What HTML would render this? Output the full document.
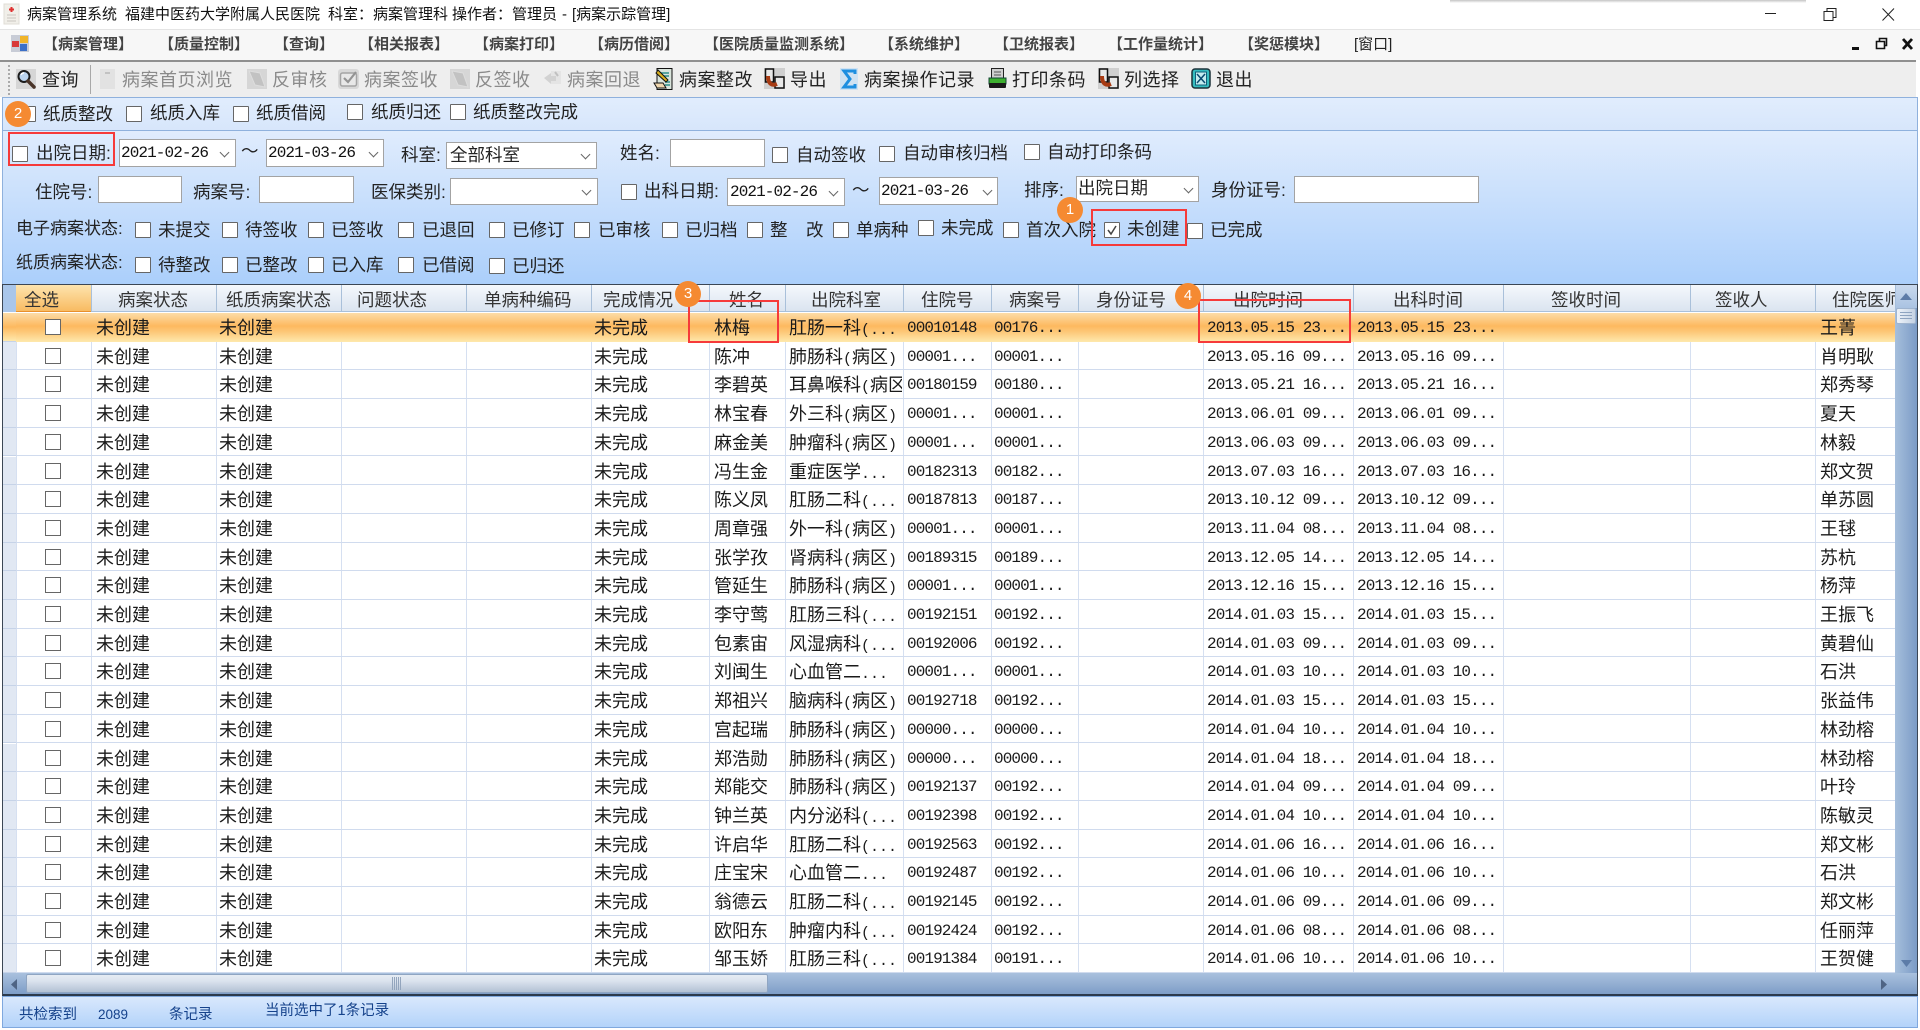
<!DOCTYPE html>
<html lang="zh-CN"><head><meta charset="utf-8"><title>病案管理系统</title>
<style>
*{box-sizing:border-box}
html,body{margin:0;padding:0;width:1920px;height:1030px;overflow:hidden;background:#fff}
body{position:relative;font-family:"Liberation Sans","Noto Sans CJK SC",sans-serif;color:#222;font-size:17.5px}
.t{position:absolute;white-space:nowrap;line-height:24px;height:24px}
.ti{font-size:15px;top:3px;color:#111}
.m{font-size:15px;top:33px;font-weight:700;color:#444}
.b{font-size:18px;letter-spacing:.5px;top:68px;color:#222}
.g{color:#8a8a8a}
.c{position:absolute;width:16px;height:16px;background:#fff;border:1.5px solid #666;border-radius:1px}
.i{position:absolute;background:#fff;border:1.5px solid #a3a3a3}
.a{position:absolute;width:7px;height:7px;border-right:1.2px solid #666;border-bottom:1.2px solid #666;transform:rotate(45deg)}
.d{font-family:"Liberation Mono",monospace;font-size:16px;letter-spacing:-.9px;color:#111}
.red{position:absolute;border:2.5px solid #f63a3a;z-index:6}
.o{position:absolute;width:26px;height:26px;border-radius:50%;background:#f58a32;color:#fff;font-size:15px;line-height:26px;text-align:center;z-index:7}
.h{position:absolute;top:288px;font-size:17.5px;line-height:24px;white-space:nowrap;color:#333}
.vh{position:absolute;top:285px;width:1px;height:27px;background:#a9c0da}
.vl{position:absolute;top:313px;width:1px;height:660px;background:#d6e0f1}
.r{position:absolute;left:16px;width:1879px;height:28.7px;border-bottom:1.5px solid #d0dbee}
.r i{position:absolute;left:29px;top:6px;width:16px;height:16px;background:#fff;border:1.5px solid #666}
.r span{position:absolute;top:1px;line-height:28px;font-size:18px;white-space:nowrap;color:#1a1a1a}
.r span b{font:15px "Liberation Mono",monospace}
.r span:nth-of-type(1){left:80px}
.r span:nth-of-type(2){left:203px}
.r span:nth-of-type(3){left:578px}
.r span:nth-of-type(4){left:698px}
.r span:nth-of-type(5){left:773px;width:113px;overflow:hidden}
.r span:nth-of-type(6){left:891px}
.r span:nth-of-type(7){left:978px}
.r span:nth-of-type(8){left:1191px}
.r span:nth-of-type(9){left:1341px}
.r span:nth-of-type(10){left:1804px}
.r span:nth-of-type(6),.r span:nth-of-type(7),.r span:nth-of-type(8),.r span:nth-of-type(9){font:16px/28px "Liberation Mono",monospace;letter-spacing:-.9px}
.sel{background:linear-gradient(#fcdca8,#fdb95f 45%,#fdc878 65%,#fee9ad);border-bottom:0}
.rh{position:absolute;left:3px;width:13px;height:28.7px;background:#e1e8f3;border-bottom:1.5px solid #c6d3e8}
.s{position:absolute;color:#15428b;font-size:14.5px;line-height:20px;white-space:nowrap}
svg{position:absolute;overflow:visible}
</style></head><body>

<!-- title bar -->
<div style="position:absolute;left:1450px;top:0;width:356px;height:3px;background:linear-gradient(#c4c4c4,#fff)"></div>
<svg style="left:3px;top:4px" width="18" height="20"><rect x="1" y="0" width="15" height="20" fill="#f1efe9" stroke="#e0ddd6"/><path d="M8.5 3v5M6 5.500h5" stroke="#e03030" stroke-width="2"/><path d="M4 11h9M4 14h9M4 17h9" stroke="#c9c6bf"/></svg>
<div class="t ti" style="left:27px">病案管理系统</div>
<div class="t ti" style="left:125px">福建中医药大学附属人民医院</div>
<div class="t ti" style="left:328px">科室：</div>
<div class="t ti" style="left:373px">病案管理科</div>
<div class="t ti" style="left:452px">操作者：</div>
<div class="t ti" style="left:512px">管理员</div>
<div class="t ti" style="left:562px">-</div>
<div class="t ti" style="left:572px">[病案示踪管理]</div>
<svg style="left:1765px;top:8px" width="130" height="13" fill="none" stroke="#222" stroke-width="1"><path d="M0 5.500h11"/><path d="M59 3.500h9v9h-9zM62 3.500V0.500h9v9h-3"/><path d="M117.500 .5l11.500 12M129 .5l-11.500 12"/></svg>

<!-- menu bar -->
<div style="position:absolute;left:0;top:29px;width:1920px;height:31px;background:#f7f7f7;border-top:1px solid #e4e4e4"></div>
<div style="position:absolute;left:0;top:60px;width:1916px;height:2px;background:#8f8f8f"></div>
<svg style="left:11px;top:35px" width="18" height="18"><rect width="18" height="17" fill="#c8ccd6"/><rect x="9" y="1" width="8" height="7" fill="#f0b428"/><rect x="1" y="6" width="7" height="6" fill="#d83838"/><rect x="9" y="9" width="7" height="7" fill="#3c70c8"/></svg>
<div class="t m" style="left:43px">【病案管理】</div>
<div class="t m" style="left:159px">【质量控制】</div>
<div class="t m" style="left:274px">【查询】</div>
<div class="t m" style="left:359px">【相关报表】</div>
<div class="t m" style="left:474px">【病案打印】</div>
<div class="t m" style="left:589px">【病历借阅】</div>
<div class="t m" style="left:704px">【医院质量监测系统】</div>
<div class="t m" style="left:879px">【系统维护】</div>
<div class="t m" style="left:994px">【卫统报表】</div>
<div class="t m" style="left:1108px">【工作量统计】</div>
<div class="t m" style="left:1239px">【奖惩模块】</div>
<div class="t m" style="left:1354px;font-weight:400;font-size:15px;color:#222">[窗口]</div>
<svg style="left:1852px;top:38px" width="62" height="13" fill="none" stroke="#111"><path d="M0 10.500h7" stroke-width="3"/><path d="M24.500 3.500h8v7h-8zM27.500 3V.5h7v7h-2" stroke-width="1.600"/><path d="M51 1l9 10M60 1l-9 10" stroke-width="2.800"/></svg>

<!-- toolbar -->
<div style="position:absolute;left:0;top:62px;width:1916px;height:35px;background:#eeeeee"></div>
<div style="position:absolute;left:8px;top:65px;width:2px;height:30px;background:repeating-linear-gradient(#aaa 0 2px,transparent 2px 4px)"></div>
<div style="position:absolute;left:90px;top:65px;width:1px;height:29px;background:#a8a8a8"></div>
<svg style="left:16px;top:69px" width="20" height="20"><rect width="20" height="20" fill="#d6d6d6"/><circle cx="8" cy="7.500" r="5.500" fill="#bcd4ee" stroke="#1c1c1c" stroke-width="2"/><path d="M5 6a3 3 0 0 1 3-2" stroke="#fff" stroke-width="1.500" fill="none"/><path d="M12 12l6 6" stroke="#4a3428" stroke-width="3.500" stroke-linecap="round"/></svg>
<div class="t b" style="left:42px">查询</div>
<svg style="left:99px;top:69px" width="18" height="20"><rect x="1" width="15" height="20" fill="#e2e2e2"/><path d="M6 4h5" stroke="#c2c2c2" stroke-width="2"/></svg>
<div class="t b g" style="left:122px">病案首页浏览</div>
<svg style="left:247px;top:69px" width="20" height="20"><rect width="20" height="20" fill="#d6d6d6"/><path d="M2 2l11 2 5 14-10-2z" fill="#c2c2c2" stroke="#ddd"/></svg>
<div class="t b g" style="left:272px">反审核</div>
<svg style="left:338px;top:69px" width="21" height="20"><rect width="21" height="20" rx="3" fill="#d8d8d8"/><rect x="2.500" y="4" width="16" height="13" rx="2" fill="#e8e8e8" stroke="#a4a4a4" stroke-width="1.500"/><path d="M6 9l4 4 8-10" stroke="#949494" stroke-width="2.200" fill="none"/></svg>
<div class="t b g" style="left:364px">病案签收</div>
<svg style="left:450px;top:69px" width="20" height="20"><rect width="20" height="20" fill="#d6d6d6"/><path d="M2 2l11 2 5 14-10-2z" fill="#c2c2c2" stroke="#ddd"/></svg>
<div class="t b g" style="left:475px">反签收</div>
<svg style="left:543px;top:69px" width="19" height="20"><rect x="8" y="2" width="10" height="13" fill="#e4e4e4"/><path d="M1 9l7-5v3h5v5H8v3z" fill="#d2d2d2"/><path d="M12 3l3 4" stroke="#c0c0c0" stroke-width="2"/></svg>
<div class="t b g" style="left:567px">病案回退</div>
<svg style="left:654px;top:68px" width="19" height="22"><rect x="3" y=".5" width="15" height="21" fill="#d9e4dc" stroke="#111"/><path d="M6 5h9M6 8h9M11 14h5M11 17h5" stroke="#2d8f88" stroke-width="1.500"/><path d="M4 2l10 10-2 2L2 5z" fill="#d8b020" stroke="#111"/><path d="M0 15h9l3 5H3z" fill="#f0d8b0" stroke="#111"/></svg>
<div class="t b" style="left:679px">病案整改</div>
<svg style="left:764px;top:68px" width="21" height="21"><rect width="21" height="21" fill="#cfcfcf"/><rect x="1.500" y="1" width="8" height="13" fill="#e8e8e8" stroke="#111" stroke-width="1.500"/><rect x="11" y="9" width="9" height="11" fill="#e8e8e8" stroke="#111" stroke-width="1.500"/><path d="M4 8c0 8 4 10 9 8" fill="none" stroke="#a83c14" stroke-width="4"/></svg>
<div class="t b" style="left:790px">导出</div>
<svg style="left:840px;top:68px" width="18" height="22"><rect width="18" height="22" fill="#cfe2f2"/><path d="M15 6V3H4l6 8-6 8h11v-3" fill="none" stroke="#1e8fe0" stroke-width="3"/></svg>
<div class="t b" style="left:864px">病案操作记录</div>
<svg style="left:988px;top:68px" width="19" height="21"><rect x="3.500" y=".5" width="12" height="11" fill="#cfcfcf" stroke="#222"/><path d="M6 4h7M6 7h7" stroke="#555"/><rect x="1" y="10" width="17" height="6" fill="#3eb030" stroke="#143"/><rect x="1" y="15" width="17" height="5" rx="1" fill="#1a1a1a"/></svg>
<div class="t b" style="left:1012px">打印条码</div>
<svg style="left:1098px;top:68px" width="21" height="21"><rect width="21" height="21" fill="#cfcfcf"/><rect x="1.500" y="1" width="8" height="13" fill="#e8e8e8" stroke="#111" stroke-width="1.500"/><rect x="11" y="9" width="9" height="11" fill="#e8e8e8" stroke="#111" stroke-width="1.500"/><path d="M4 8c0 8 4 10 9 8" fill="none" stroke="#a83c14" stroke-width="4"/></svg>
<div class="t b" style="left:1124px">列选择</div>
<svg style="left:1191px;top:68px" width="20" height="21"><rect x="1" y="1" width="18" height="19" rx="3" fill="#35bcc0" stroke="#1c3038" stroke-width="1.500"/><rect x="4.500" y="4" width="11" height="13" fill="#c4ecf0" stroke="#10607a"/><path d="M6 6l8 9M14 6l-8 9" stroke="#0a4a70" stroke-width="1.500"/></svg>
<div class="t b" style="left:1216px">退出</div>

<!-- filter panel -->
<div style="position:absolute;left:2px;top:97px;width:1916px;height:34px;background:linear-gradient(#e1edfd,#d7e6fb);border:1px solid #8fb1dd"></div>
<div style="position:absolute;left:2px;top:130px;width:1916px;height:155px;background:linear-gradient(#e0ecfd,#abcffb);border:1px solid #8fb1dd;border-top:1.5px solid #8fb1dd"></div>

<!-- row 1 -->
<div class="c" style="left:20px;top:106px"></div><div class="t" style="left:43px;top:102px">纸质整改</div>
<div class="c" style="left:126px;top:106px"></div><div class="t" style="left:150px;top:101px">纸质入库</div>
<div class="c" style="left:233px;top:106px"></div><div class="t" style="left:256px;top:101px">纸质借阅</div>
<div class="c" style="left:347px;top:104px"></div><div class="t" style="left:371px;top:100px">纸质归还</div>
<div class="c" style="left:450px;top:104px"></div><div class="t" style="left:473px;top:100px">纸质整改完成</div>
<div class="o" style="left:5px;top:101px">2</div>

<!-- row 2 -->
<div class="red" style="left:8px;top:132px;width:107px;height:34px"></div>
<div class="c" style="left:12px;top:146px"></div><div class="t" style="left:36px;top:141px">出院日期:</div>
<div class="i" style="left:119px;top:139px;width:117px;height:28px"></div><div class="t d" style="left:121px;top:141px">2021-02-26</div><div class="a" style="left:221px;top:149px"></div>
<div class="t" style="left:241px;top:139px">～</div>
<div class="i" style="left:266px;top:139px;width:118px;height:28px"></div><div class="t d" style="left:268px;top:141px">2021-03-26</div><div class="a" style="left:370px;top:149px"></div>
<div class="t" style="left:401px;top:143px">科室:</div>
<div class="i" style="left:446px;top:142px;width:151px;height:27px"></div><div class="t" style="left:450px;top:143px">全部科室</div><div class="a" style="left:582px;top:151px"></div>
<div class="t" style="left:620px;top:141px">姓名:</div>
<div class="i" style="left:670px;top:139px;width:95px;height:28px"></div>
<div class="c" style="left:772px;top:147px"></div><div class="t" style="left:796px;top:143px">自动签收</div>
<div class="c" style="left:879px;top:146px"></div><div class="t" style="left:903px;top:141px">自动审核归档</div>
<div class="c" style="left:1024px;top:144px"></div><div class="t" style="left:1047px;top:140px">自动打印条码</div>

<!-- row 3 -->
<div class="t" style="left:35px;top:180px">住院号:</div>
<div class="i" style="left:98px;top:176px;width:84px;height:27px"></div>
<div class="t" style="left:193px;top:180px">病案号:</div>
<div class="i" style="left:259px;top:176px;width:95px;height:27px"></div>
<div class="t" style="left:371px;top:180px">医保类别:</div>
<div class="i" style="left:450px;top:178px;width:148px;height:27px"></div><div class="a" style="left:583px;top:187px"></div>
<div class="c" style="left:621px;top:184px"></div><div class="t" style="left:644px;top:179px">出科日期:</div>
<div class="i" style="left:727px;top:178px;width:118px;height:28px"></div><div class="t d" style="left:730px;top:180px">2021-02-26</div><div class="a" style="left:830px;top:188px"></div>
<div class="t" style="left:852px;top:178px">～</div>
<div class="i" style="left:879px;top:177px;width:119px;height:28px"></div><div class="t d" style="left:881px;top:179px">2021-03-26</div><div class="a" style="left:984px;top:187px"></div>
<div class="t" style="left:1024px;top:178px">排序:</div>
<div class="i" style="left:1076px;top:176px;width:123px;height:26px"></div><div class="t" style="left:1078px;top:176px">出院日期</div><div class="a" style="left:1185px;top:185px"></div>
<div class="t" style="left:1211px;top:178px">身份证号:</div>
<div class="i" style="left:1294px;top:176px;width:185px;height:27px"></div>

<!-- row 4 -->
<div class="t" style="left:16px;top:217px;font-size:17px">电子病案状态:</div>
<div class="c" style="left:135px;top:222px"></div><div class="t" style="left:158px;top:218px">未提交</div>
<div class="c" style="left:222px;top:222px"></div><div class="t" style="left:245px;top:218px">待签收</div>
<div class="c" style="left:308px;top:222px"></div><div class="t" style="left:331px;top:218px">已签收</div>
<div class="c" style="left:398px;top:222px"></div><div class="t" style="left:422px;top:218px">已退回</div>
<div class="c" style="left:489px;top:222px"></div><div class="t" style="left:512px;top:218px">已修订</div>
<div class="c" style="left:574px;top:222px"></div><div class="t" style="left:598px;top:218px">已审核</div>
<div class="c" style="left:662px;top:222px"></div><div class="t" style="left:685px;top:218px">已归档</div>
<div class="c" style="left:747px;top:222px"></div><div class="t" style="left:770px;top:218px">整</div><div class="t" style="left:806px;top:218px">改</div>
<div class="c" style="left:833px;top:222px"></div><div class="t" style="left:856px;top:218px">单病种</div>
<div class="c" style="left:918px;top:220px"></div><div class="t" style="left:941px;top:216px">未完成</div>
<div class="c" style="left:1003px;top:222px"></div><div class="t" style="left:1026px;top:218px">首次入院</div>
<div class="red" style="left:1091px;top:209px;width:96px;height:37px"></div>
<div class="c" style="left:1104px;top:222px"></div><svg style="left:1106px;top:224px" width="12" height="12"><path d="M2 6l3 4 5-8" fill="none" stroke="#444" stroke-width="1.500"/></svg><div class="t" style="left:1127px;top:217px">未创建</div>
<div class="c" style="left:1187px;top:223px"></div><div class="t" style="left:1210px;top:218px">已完成</div>
<div class="o" style="left:1057px;top:197px">1</div>

<!-- row 5 -->
<div class="t" style="left:16px;top:251px;font-size:17px">纸质病案状态:</div>
<div class="c" style="left:135px;top:257px"></div><div class="t" style="left:158px;top:253px">待整改</div>
<div class="c" style="left:222px;top:257px"></div><div class="t" style="left:245px;top:253px">已整改</div>
<div class="c" style="left:308px;top:257px"></div><div class="t" style="left:331px;top:253px">已入库</div>
<div class="c" style="left:398px;top:257px"></div><div class="t" style="left:422px;top:253px">已借阅</div>
<div class="c" style="left:489px;top:258px"></div><div class="t" style="left:512px;top:254px">已归还</div>

<!-- grid frame -->
<div style="position:absolute;left:2px;top:284px;width:1916px;height:712px;background:#fff;border:1.5px solid #3b4654;border-bottom:2px solid #2c3a4c"></div>
<div style="position:absolute;left:3px;top:285px;width:1892px;height:27px;background:linear-gradient(#f5f8fc,#dbe4f0);border-bottom:1px solid #a9c0da"></div>
<div style="position:absolute;left:3px;top:285px;width:13px;height:27px;background:#a9c6ea"></div>
<div style="position:absolute;left:16px;top:285px;width:75px;height:27px;background:linear-gradient(#fde4ae,#f8bb62);border-bottom:1px solid #e8902c"></div>

<div class="vh" style="left:91px"></div><div class="vh" style="left:216px"></div><div class="vh" style="left:341px"></div><div class="vh" style="left:466px"></div><div class="vh" style="left:591px"></div><div class="vh" style="left:709px"></div><div class="vh" style="left:785px"></div><div class="vh" style="left:903px"></div><div class="vh" style="left:991px"></div><div class="vh" style="left:1078px"></div><div class="vh" style="left:1203px"></div><div class="vh" style="left:1353px"></div><div class="vh" style="left:1503px"></div><div class="vh" style="left:1690px"></div><div class="vh" style="left:1815px"></div>

<div class="h" style="left:24px">全选</div>
<div class="h" style="left:118px">病案状态</div>
<div class="h" style="left:226px">纸质病案状态</div>
<div class="h" style="left:357px">问题状态</div>
<div class="h" style="left:484px">单病种编码</div>
<div class="h" style="left:603px">完成情况</div>
<div class="h" style="left:729px">姓名</div>
<div class="h" style="left:811px">出院科室</div>
<div class="h" style="left:921px">住院号</div>
<div class="h" style="left:1009px">病案号</div>
<div class="h" style="left:1096px">身份证号</div>
<div class="h" style="left:1233px">出院时间</div>
<div class="h" style="left:1393px">出科时间</div>
<div class="h" style="left:1551px">签收时间</div>
<div class="h" style="left:1715px">签收人</div>
<div class="h" style="left:1832px;width:63px;overflow:hidden">住院医师</div>

<!-- grid lines -->
<div class="vl" style="left:16px"></div><div class="vl" style="left:91px"></div><div class="vl" style="left:216px"></div><div class="vl" style="left:341px"></div><div class="vl" style="left:466px"></div><div class="vl" style="left:591px"></div><div class="vl" style="left:709px"></div><div class="vl" style="left:785px"></div><div class="vl" style="left:903px"></div><div class="vl" style="left:991px"></div><div class="vl" style="left:1078px"></div><div class="vl" style="left:1203px"></div><div class="vl" style="left:1353px"></div><div class="vl" style="left:1503px"></div><div class="vl" style="left:1690px"></div><div class="vl" style="left:1815px"></div>

<!-- row headers -->
<div class="rh" style="top:313px;background:linear-gradient(#fcdca8,#fdb95f 50%,#fee9ad)"></div>
<div class="rh" style="top:341.7px"></div><div class="rh" style="top:370.4px"></div><div class="rh" style="top:399.1px"></div><div class="rh" style="top:427.8px"></div><div class="rh" style="top:456.5px"></div><div class="rh" style="top:485.2px"></div><div class="rh" style="top:513.9px"></div><div class="rh" style="top:542.6px"></div><div class="rh" style="top:571.3px"></div><div class="rh" style="top:600px"></div><div class="rh" style="top:628.7px"></div><div class="rh" style="top:657.4px"></div><div class="rh" style="top:686.1px"></div><div class="rh" style="top:714.8px"></div><div class="rh" style="top:743.5px"></div><div class="rh" style="top:772.2px"></div><div class="rh" style="top:800.9px"></div><div class="rh" style="top:829.6px"></div><div class="rh" style="top:858.3px"></div><div class="rh" style="top:887px"></div><div class="rh" style="top:915.7px"></div><div class="rh" style="top:944.4px"></div>

<!-- rows -->
<div class="r sel" style="top:313px"><i></i><span>未创建</span><span>未创建</span><span>未完成</span><span>林梅</span><span>肛肠一科<b>(...</b></span><span>00010148</span><span>00176...</span><span>2013.05.15 23...</span><span>2013.05.15 23...</span><span>王菁</span></div>
<div class="r" style="top:341.7px"><i></i><span>未创建</span><span>未创建</span><span>未完成</span><span>陈冲</span><span>肺肠科<b>(</b>病区<b>)</b></span><span>00001...</span><span>00001...</span><span>2013.05.16 09...</span><span>2013.05.16 09...</span><span>肖明耿</span></div>
<div class="r" style="top:370.4px"><i></i><span>未创建</span><span>未创建</span><span>未完成</span><span>李碧英</span><span>耳鼻喉科<b>(</b>病区<b>)</b></span><span>00180159</span><span>00180...</span><span>2013.05.21 16...</span><span>2013.05.21 16...</span><span>郑秀琴</span></div>
<div class="r" style="top:399.1px"><i></i><span>未创建</span><span>未创建</span><span>未完成</span><span>林宝春</span><span>外三科<b>(</b>病区<b>)</b></span><span>00001...</span><span>00001...</span><span>2013.06.01 09...</span><span>2013.06.01 09...</span><span>夏天</span></div>
<div class="r" style="top:427.8px"><i></i><span>未创建</span><span>未创建</span><span>未完成</span><span>麻金美</span><span>肿瘤科<b>(</b>病区<b>)</b></span><span>00001...</span><span>00001...</span><span>2013.06.03 09...</span><span>2013.06.03 09...</span><span>林毅</span></div>
<div class="r" style="top:456.5px"><i></i><span>未创建</span><span>未创建</span><span>未完成</span><span>冯生金</span><span>重症医学<b>...</b></span><span>00182313</span><span>00182...</span><span>2013.07.03 16...</span><span>2013.07.03 16...</span><span>郑文贺</span></div>
<div class="r" style="top:485.2px"><i></i><span>未创建</span><span>未创建</span><span>未完成</span><span>陈义凤</span><span>肛肠二科<b>(...</b></span><span>00187813</span><span>00187...</span><span>2013.10.12 09...</span><span>2013.10.12 09...</span><span>单苏圆</span></div>
<div class="r" style="top:513.9px"><i></i><span>未创建</span><span>未创建</span><span>未完成</span><span>周章强</span><span>外一科<b>(</b>病区<b>)</b></span><span>00001...</span><span>00001...</span><span>2013.11.04 08...</span><span>2013.11.04 08...</span><span>王毬</span></div>
<div class="r" style="top:542.6px"><i></i><span>未创建</span><span>未创建</span><span>未完成</span><span>张学孜</span><span>肾病科<b>(</b>病区<b>)</b></span><span>00189315</span><span>00189...</span><span>2013.12.05 14...</span><span>2013.12.05 14...</span><span>苏杭</span></div>
<div class="r" style="top:571.3px"><i></i><span>未创建</span><span>未创建</span><span>未完成</span><span>管延生</span><span>肺肠科<b>(</b>病区<b>)</b></span><span>00001...</span><span>00001...</span><span>2013.12.16 15...</span><span>2013.12.16 15...</span><span>杨萍</span></div>
<div class="r" style="top:600px"><i></i><span>未创建</span><span>未创建</span><span>未完成</span><span>李守莺</span><span>肛肠三科<b>(...</b></span><span>00192151</span><span>00192...</span><span>2014.01.03 15...</span><span>2014.01.03 15...</span><span>王振飞</span></div>
<div class="r" style="top:628.7px"><i></i><span>未创建</span><span>未创建</span><span>未完成</span><span>包素宙</span><span>风湿病科<b>(...</b></span><span>00192006</span><span>00192...</span><span>2014.01.03 09...</span><span>2014.01.03 09...</span><span>黄碧仙</span></div>
<div class="r" style="top:657.4px"><i></i><span>未创建</span><span>未创建</span><span>未完成</span><span>刘闽生</span><span>心血管二<b>...</b></span><span>00001...</span><span>00001...</span><span>2014.01.03 10...</span><span>2014.01.03 10...</span><span>石洪</span></div>
<div class="r" style="top:686.1px"><i></i><span>未创建</span><span>未创建</span><span>未完成</span><span>郑祖兴</span><span>脑病科<b>(</b>病区<b>)</b></span><span>00192718</span><span>00192...</span><span>2014.01.03 15...</span><span>2014.01.03 15...</span><span>张益伟</span></div>
<div class="r" style="top:714.8px"><i></i><span>未创建</span><span>未创建</span><span>未完成</span><span>宫起瑞</span><span>肺肠科<b>(</b>病区<b>)</b></span><span>00000...</span><span>00000...</span><span>2014.01.04 10...</span><span>2014.01.04 10...</span><span>林劲榕</span></div>
<div class="r" style="top:743.5px"><i></i><span>未创建</span><span>未创建</span><span>未完成</span><span>郑浩勋</span><span>肺肠科<b>(</b>病区<b>)</b></span><span>00000...</span><span>00000...</span><span>2014.01.04 18...</span><span>2014.01.04 18...</span><span>林劲榕</span></div>
<div class="r" style="top:772.2px"><i></i><span>未创建</span><span>未创建</span><span>未完成</span><span>郑能交</span><span>肺肠科<b>(</b>病区<b>)</b></span><span>00192137</span><span>00192...</span><span>2014.01.04 09...</span><span>2014.01.04 09...</span><span>叶玲</span></div>
<div class="r" style="top:800.9px"><i></i><span>未创建</span><span>未创建</span><span>未完成</span><span>钟兰英</span><span>内分泌科<b>(...</b></span><span>00192398</span><span>00192...</span><span>2014.01.04 10...</span><span>2014.01.04 10...</span><span>陈敏灵</span></div>
<div class="r" style="top:829.6px"><i></i><span>未创建</span><span>未创建</span><span>未完成</span><span>许启华</span><span>肛肠二科<b>(...</b></span><span>00192563</span><span>00192...</span><span>2014.01.06 16...</span><span>2014.01.06 16...</span><span>郑文彬</span></div>
<div class="r" style="top:858.3px"><i></i><span>未创建</span><span>未创建</span><span>未完成</span><span>庄宝宋</span><span>心血管二<b>...</b></span><span>00192487</span><span>00192...</span><span>2014.01.06 10...</span><span>2014.01.06 10...</span><span>石洪</span></div>
<div class="r" style="top:887px"><i></i><span>未创建</span><span>未创建</span><span>未完成</span><span>翁德云</span><span>肛肠二科<b>(...</b></span><span>00192145</span><span>00192...</span><span>2014.01.06 09...</span><span>2014.01.06 09...</span><span>郑文彬</span></div>
<div class="r" style="top:915.7px"><i></i><span>未创建</span><span>未创建</span><span>未完成</span><span>欧阳东</span><span>肿瘤内科<b>(...</b></span><span>00192424</span><span>00192...</span><span>2014.01.06 08...</span><span>2014.01.06 08...</span><span>任丽萍</span></div>
<div class="r" style="top:944.4px;height:28.6px"><i></i><span>未创建</span><span>未创建</span><span>未完成</span><span>邹玉娇</span><span>肛肠三科<b>(...</b></span><span>00191384</span><span>00191...</span><span>2014.01.06 10...</span><span>2014.01.06 10...</span><span>王贺健</span></div>

<!-- vertical scrollbar -->
<div style="position:absolute;left:1895px;top:285px;width:22px;height:688px;background:linear-gradient(90deg,#a6bfdc,#7b9bc6)"></div>
<div style="position:absolute;left:1896px;top:285px;width:21px;height:23px;background:linear-gradient(#c9d9ee,#aac3e2)"></div>
<svg style="left:1900px;top:293px" width="12" height="8"><path d="M0 7L6 0l6 7z" fill="#5d7ca8"/></svg>
<div style="position:absolute;left:1896px;top:308px;width:20px;height:16px;background:linear-gradient(90deg,#eef3f9,#c4d2e4);border:1px solid #9fb4cf;border-radius:2px"></div>
<div style="position:absolute;left:1900px;top:312px;width:12px;height:8px;background:repeating-linear-gradient(#8ea4c0 0 1px,transparent 1px 3px)"></div>
<svg style="left:1901px;top:960px" width="11" height="7"><path d="M0 0h11L5.500 7z" fill="#5d7ca8"/></svg>

<!-- horizontal scrollbar -->
<div style="position:absolute;left:3px;top:973px;width:1914px;height:21px;background:linear-gradient(#a9c1de,#7e9dc7)"></div>
<svg style="left:11px;top:979px" width="6" height="11"><path d="M6 0v11L0 5.500z" fill="#4f6484"/></svg>
<div style="position:absolute;left:26px;top:974px;width:742px;height:19px;background:linear-gradient(#e6ecf4,#dbe3ee 35%,#b3c1d4);border:1px solid #8fa5c2;border-radius:2px"></div>
<div style="position:absolute;left:392px;top:977px;width:9px;height:13px;background:repeating-linear-gradient(90deg,#93a5bd 0 1px,transparent 1px 2px)"></div>
<svg style="left:1881px;top:979px" width="6" height="11"><path d="M0 0v11l6-5.500z" fill="#4f6484"/></svg>

<!-- annotations on grid -->
<div class="red" style="left:688px;top:300px;width:91px;height:43px"></div>
<div class="red" style="left:1198px;top:299px;width:153px;height:44px"></div>
<div class="o" style="left:675px;top:281px">3</div>
<div class="o" style="left:1175px;top:283px">4</div>

<!-- status bar -->
<div style="position:absolute;left:2px;top:996px;width:1916px;height:32px;background:linear-gradient(#d9e8fc,#b3d3fa);border:1px solid #7fa8de"></div>
<div class="s" style="left:19px;top:1005px">共检索到</div>
<div class="s" style="left:98px;top:1005px;font-size:13.500px">2089</div>
<div class="s" style="left:169px;top:1005px">条记录</div>
<div class="s" style="left:265px;top:1001px">当前选中了1条记录</div>
</body></html>
